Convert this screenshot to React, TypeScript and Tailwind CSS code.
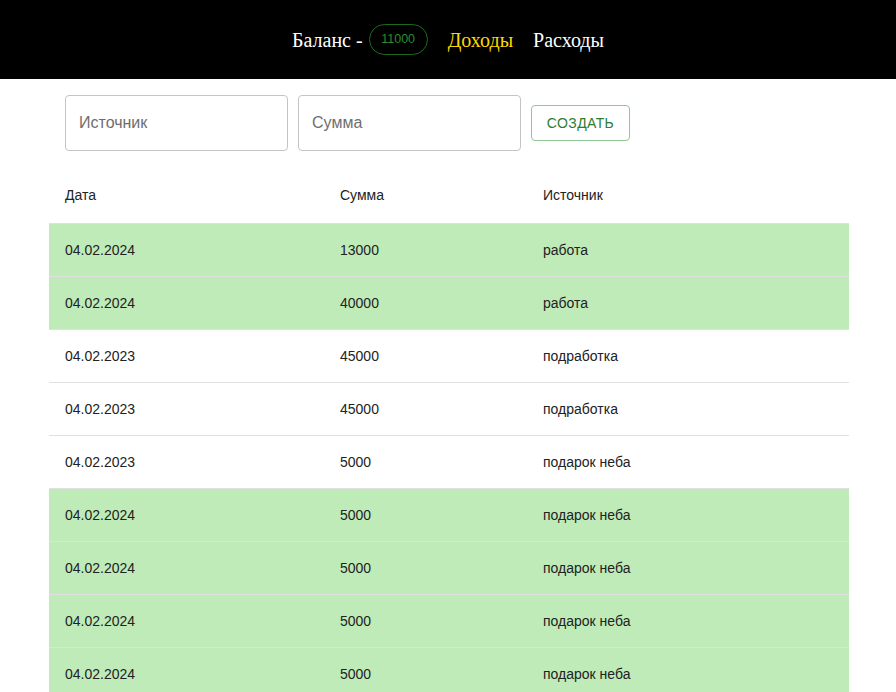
import React from 'react';

const rows = [
  { date: '04.02.2024', sum: '13000', source: 'работа', green: true },
  { date: '04.02.2024', sum: '40000', source: 'работа', green: true },
  { date: '04.02.2023', sum: '45000', source: 'подработка', green: false },
  { date: '04.02.2023', sum: '45000', source: 'подработка', green: false },
  { date: '04.02.2023', sum: '5000', source: 'подарок неба', green: false },
  { date: '04.02.2024', sum: '5000', source: 'подарок неба', green: true },
  { date: '04.02.2024', sum: '5000', source: 'подарок неба', green: true },
  { date: '04.02.2024', sum: '5000', source: 'подарок неба', green: true },
  { date: '04.02.2024', sum: '5000', source: 'подарок неба', green: true },
];

export default function App() {
  return (
    <div className="min-h-screen bg-white" style={{ fontFamily: '"Liberation Sans", Arial, sans-serif' }}>
      {/* Header */}
      <header className="h-[79px] bg-black flex items-center justify-center" style={{ fontFamily: '"Liberation Serif", "Times New Roman", serif' }}>
        <div className="flex items-center text-[20px] text-white">
          <span>Баланс -</span>
          <span
            className="ml-[6px] h-[31px] w-[59px] rounded-full border border-[#1b6b1f] text-[#2e8b2e] text-[12.5px] flex items-center justify-center"
            style={{ fontFamily: '"Liberation Sans", Arial, sans-serif' }}
          >
            11000
          </span>
          <span className="ml-[20px] text-[#ffd700]">Доходы</span>
          <span className="ml-[20px] text-white">Расходы</span>
        </div>
      </header>

      <main className="w-[800px] ml-[49px]">
        {/* Form */}
        <div className="flex items-center pl-[16px] pt-[16px]">
          <div className="w-[223px] h-[56px] border border-[#c4c4c4] rounded-[4px] flex items-center px-[13px] text-[16px] text-[#6e6e6e]">
            Источник
          </div>
          <div className="ml-[10px] w-[223px] h-[56px] border border-[#c4c4c4] rounded-[4px] flex items-center px-[13px] text-[16px] text-[#6e6e6e]">
            Сумма
          </div>
          <button className="ml-[10px] w-[99px] h-[36px] border border-[#8fc795] rounded-[4px] text-[#2e7d32] text-[14px] tracking-[0.4px]">
            СОЗДАТЬ
          </button>
        </div>

        {/* Table */}
        <div className="mt-[16px] text-[14px] text-[#222]">
          <div className="flex h-[57px] pt-[1px] items-center border-b border-[#e0e0e0]">
            <div className="w-[275px] pl-[16px]">Дата</div>
            <div className="w-[203px] pl-[16px]">Сумма</div>
            <div className="flex-1 pl-[16px]">Источник</div>
          </div>
          {rows.map((r, i) => (
            <div
              key={i}
              className={`flex h-[53px] pt-[1px] items-center border-b border-[#e0e0e0] ${r.green ? 'bg-[#bfebb8]' : 'bg-white'}`}
            >
              <div className="w-[275px] pl-[16px]">{r.date}</div>
              <div className="w-[203px] pl-[16px]">{r.sum}</div>
              <div className="flex-1 pl-[16px]">{r.source}</div>
            </div>
          ))}
        </div>
      </main>
    </div>
  );
}
